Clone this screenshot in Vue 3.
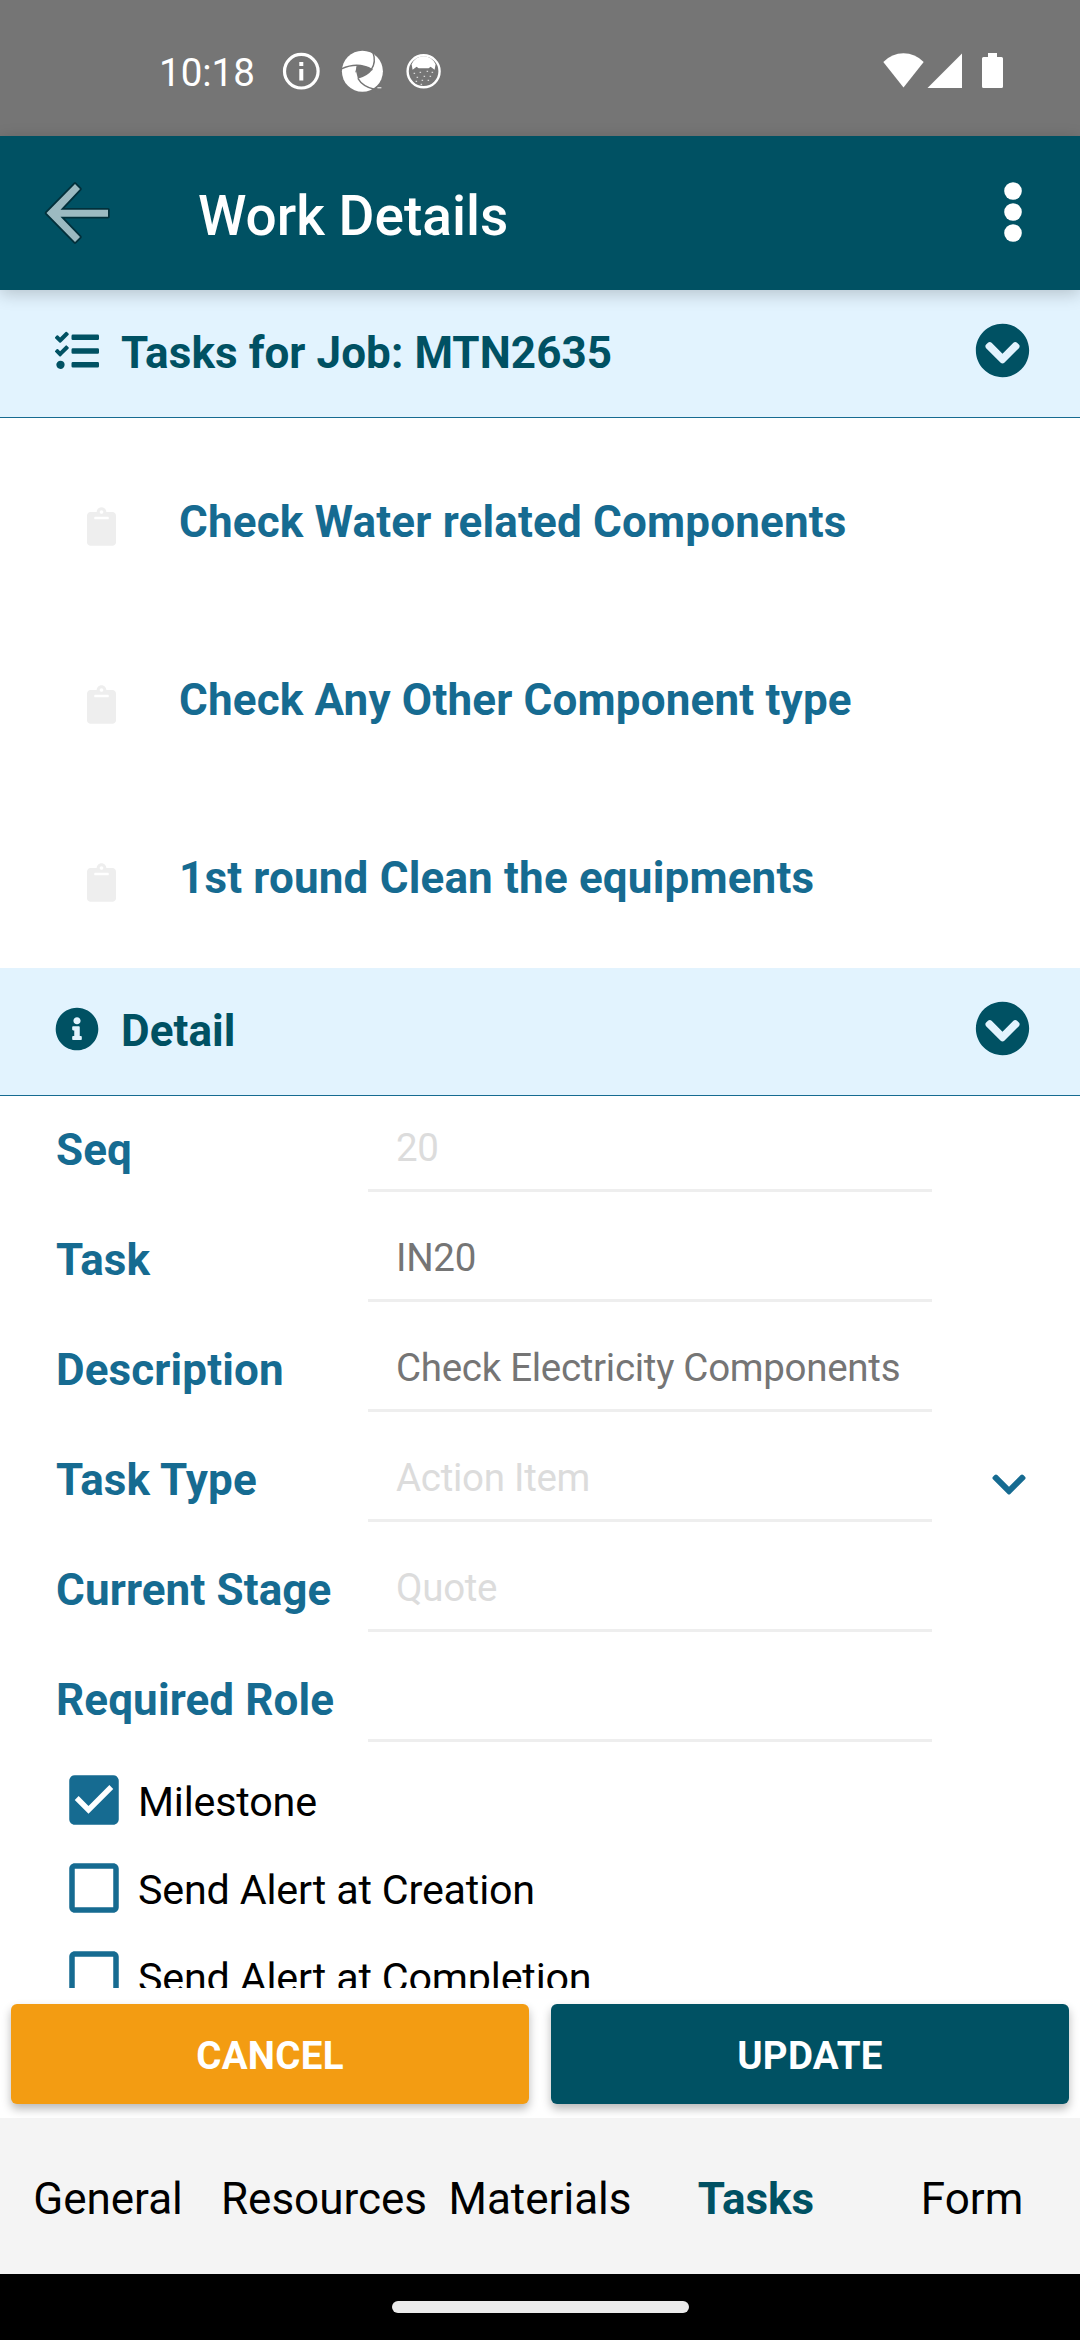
<script setup>
import { ref } from 'vue'

const jobTasks = [
  'Check Water related Components',
  'Check Any Other Component type',
  '1st round Clean the equipments',
]

const fields = [
  { label: 'Seq', value: '20', disabled: true },
  { label: 'Task', value: 'IN20' },
  { label: 'Description', value: 'Check Electricity Components' },
  { label: 'Task Type', value: 'Action Item', disabled: true, picker: true },
  { label: 'Current Stage', value: 'Quote', disabled: true },
  { label: 'Required Role', value: '' },
]

const options = ref([
  { label: 'Milestone', checked: true },
  { label: 'Send Alert at Creation', checked: false },
  { label: 'Send Alert at Completion', checked: false },
])

const tabs = ['General', 'Resources', 'Materials', 'Tasks', 'Form']
const activeTab = ref('Tasks')

const chevronCircle =
  'M504 256c0 137-111 248-248 248S8 393 8 256 119 8 256 8s248 111 248 248zM273 369.9l135.5-135.5c9.4-9.4 9.4-24.6 0-33.9l-17-17c-9.4-9.4-24.6-9.4-33.9 0L256 285.1 154.4 183.5c-9.4-9.4-24.6-9.4-33.9 0l-17 17c-9.4 9.4-9.4 24.6 0 33.9L239 369.9c9.4 9.4 24.6 9.4 34 0z'
const boxChecked =
  'M19 3H5c-1.11 0-2 .9-2 2v14c0 1.1.89 2 2 2h14c1.11 0 2-.9 2-2V5c0-1.1-.89-2-2-2zm-9 14l-5-5 1.41-1.41L10 14.17l7.59-7.59L19 8l-9 9z'
const boxBlank =
  'M19 5v14H5V5h14m0-2H5c-1.1 0-2 .9-2 2v14c0 1.1.9 2 2 2h14c1.1 0 2-.9 2-2V5c0-1.1-.9-2-2-2z'
</script>

<template>
  <div class="screen">
    <div class="status">
      <span class="clock">10:18</span>
      <svg class="notifications" width="174" height="54" viewBox="0 0 174 54">
        <circle cx="25.3" cy="27.2" r="16.8" fill="none" stroke="#fff" stroke-width="3.2" />
        <path d="M23.3 18h4v4h-4zM23.3 25h4v11.5h-4z" fill="#fff" />
        <g transform="translate(86.4 27.3)">
          <circle r="20.5" fill="#fff" />
          <path d="M-6-5Q2-7 10-1.5Q5 5-4.5 7.5Q-6.5 2-6-5z" fill="#757575" />
          <g fill="none" stroke="#757575" stroke-width="1.4">
            <path d="M10-1.5Q-4-10-21-2.5" />
            <path d="M9-2Q14-9 10.5-19" />
            <path d="M-4.5 7Q0 15 12 18" />
            <path d="M-5-5l-1.5 6" />
          </g>
          <path d="M12 17l6-4 3 5-7 3z" fill="#757575" />
          <path d="M15 16.5h4" stroke="#fff" stroke-width="1" />
        </g>
        <g transform="translate(147.6 27.3)">
          <circle r="16" fill="none" stroke="#fff" stroke-width="2.4" />
          <path d="M-12-7Q-8-15 0-15T12-7L11-1.500 7-4.500 5-3H-5L-7-4.500-11-1.500z" fill="#fff" />
          <path d="M-10 2h1.500M-4 1h1.500M3 0h1.500M8 1h1.500M-7 6h1.500M0 5h1.500M6 5h1.500M-8 10h1.500M-2 9h1.500M4 9h1.500M-3 13h1.500" stroke="#d5d5d5" stroke-width="1.3" />
        </g>
      </svg>
      <svg class="system" width="124" height="40" viewBox="0 0 124 40">
        <path d="M3.3 12Q12 3.3 23.5 3.3T43.7 12L23.5 37.5z" fill="#fff" />
        <path d="M82 3.5V38H47.5z" fill="#fff" />
        <path d="M108 3h9v4h4.5q1.500 0 1.500 1.500v28q0 1.500-1.500 1.500h-18q-1.500 0-1.500-1.500v-28q0-1.500 1.500-1.500h4.500z" fill="#fff" />
      </svg>
    </div>

    <header class="appbar">
      <svg class="back" width="70" height="66" viewBox="0 0 70 66">
        <path
          d="M6.500 33 35 4l5 5-19.500 20.700H68v7H20.500L40 57l-5 5z"
          fill="#9cbac1" stroke="#02303b" stroke-width="3.600" stroke-linejoin="round" paint-order="stroke"
        />
      </svg>
      <h1>Work Details</h1>
      <svg class="more" width="20" height="62" viewBox="0 0 20 62">
        <circle cx="10" cy="10" r="8.800" /><circle cx="10" cy="31" r="8.800" /><circle cx="10" cy="52" r="8.800" />
      </svg>
    </header>

    <main>
      <section class="bar">
        <svg width="44" height="44" viewBox="0 0 512 512">
          <path d="M139.61 35.5a12 12 0 0 0-17 0L58.93 98.81l-22.7-22.12a12 12 0 0 0-17 0L3.53 92.41a12 12 0 0 0 0 17l47.59 47.4a12.78 12.78 0 0 0 17.61 0l15.59-15.62L156.52 69a12.09 12.09 0 0 0 .09-17zm0 159.19a12 12 0 0 0-17 0l-63.68 63.72-22.7-22.1a12 12 0 0 0-17 0L3.53 252a12 12 0 0 0 0 17L51 316.5a12.77 12.77 0 0 0 17.6 0l15.7-15.69 72.2-72.22a12 12 0 0 0 .09-16.9zM64 368c-26.49 0-48.59 21.5-48.59 48S37.53 464 64 464a48 48 0 0 0 0-96zm432 16H208a16 16 0 0 0-16 16v32a16 16 0 0 0 16 16h288a16 16 0 0 0 16-16v-32a16 16 0 0 0-16-16zm0-320H208a16 16 0 0 0-16 16v32a16 16 0 0 0 16 16h288a16 16 0 0 0 16-16V80a16 16 0 0 0-16-16zm0 160H208a16 16 0 0 0-16 16v32a16 16 0 0 0 16 16h288a16 16 0 0 0 16-16v-32a16 16 0 0 0-16-16z" />
        </svg>
        <h2>Tasks for Job: MTN2635</h2>
        <svg width="55" height="55" viewBox="0 0 512 512"><path :d="chevronCircle" /></svg>
      </section>

      <ul class="tasks">
        <li v-for="task in jobTasks" :key="task">
          <svg width="29" height="39" viewBox="0 0 384 512">
            <path d="M384 112v352c0 26.510-21.490 48-48 48H48c-26.510 0-48-21.490-48-48V112c0-26.510 21.490-48 48-48h80c0-35.290 28.710-64 64-64s64 28.710 64 64h80c26.510 0 48 21.490 48 48zM192 40c-13.255 0-24 10.745-24 24s10.745 24 24 24 24-10.745 24-24-10.745-24-24-24m96 114v-20a6 6 0 0 0-6-6H102a6 6 0 0 0-6 6v20a6 6 0 0 0 6 6h180a6 6 0 0 0 6-6z" />
          </svg>
          <span>{{ task }}</span>
        </li>
      </ul>

      <section class="bar">
        <svg width="44" height="44" viewBox="0 0 512 512">
          <path d="M256 8C119.043 8 8 119.083 8 256c0 136.997 111.043 248 248 248s248-111.003 248-248C504 119.083 392.957 8 256 8zm0 110c23.196 0 42 18.804 42 42s-18.804 42-42 42-42-18.804-42-42 18.804-42 42-42zm56 254c0 6.627-5.373 12-12 12h-88c-6.627 0-12-5.373-12-12v-24c0-6.627 5.373-12 12-12h12v-64h-12c-6.627 0-12-5.373-12-12v-24c0-6.627 5.373-12 12-12h64c6.627 0 12 5.373 12 12v100h12c6.627 0 12 5.373 12 12v24z" />
        </svg>
        <h2>Detail</h2>
        <svg width="55" height="55" viewBox="0 0 512 512"><path :d="chevronCircle" /></svg>
      </section>

      <div class="form">
        <div v-for="field in fields" :key="field.label" class="row">
          <span class="label">{{ field.label }}</span>
          <span class="value" :class="{ disabled: field.disabled }">{{ field.value }}</span>
          <svg v-if="field.picker" class="picker" width="34" height="39" viewBox="0 0 448 512">
            <path d="M207.029 381.476L12.686 187.132c-9.373-9.373-9.373-24.569 0-33.941l22.667-22.667c9.357-9.357 24.522-9.375 33.901-.04L224 284.505l154.745-154.021c9.379-9.335 24.544-9.317 33.901.04l22.667 22.667c9.373 9.373 9.373 24.569 0 33.941L240.971 381.476c-9.373 9.372-24.569 9.372-33.942 0z" />
          </svg>
        </div>
      </div>

      <div class="options">
        <label v-for="option in options" :key="option.label" @click="option.checked = !option.checked">
          <svg width="66" height="66" viewBox="0 0 24 24"><path :d="option.checked ? boxChecked : boxBlank" /></svg>
          <span>{{ option.label }}</span>
        </label>
      </div>
    </main>

    <div class="actions">
      <button class="cancel">CANCEL</button>
      <button class="update">UPDATE</button>
    </div>

    <nav>
      <a v-for="tab in tabs" :key="tab" :class="{ active: tab === activeTab }" @click="activeTab = tab">{{ tab }}</a>
    </nav>

    <div class="gesture"><i></i></div>
  </div>
</template>

<style>
body {
  margin: 0;
}
</style>

<style scoped>
.screen {
  display: flex;
  flex-direction: column;
  width: 1080px;
  height: 2340px;
  overflow: hidden;
  background: #fff;
  font-family: Roboto, 'Liberation Sans', sans-serif;
  font-size: 44px;
  line-height: 52px;
  color: #000;
}
svg {
  display: block;
  flex: none;
}
h1,
h2,
ul {
  margin: 0;
  padding: 0;
}
.status {
  flex: none;
  height: 136px;
  box-sizing: border-box;
  display: flex;
  align-items: flex-start;
  padding: 0 76px 0 159px;
  background: #757575;
  color: #fff;
}
.clock {
  width: 117px;
  margin-top: 47px;
  font-size: 38.5px;
}
.notifications {
  margin-top: 44px;
}
.system {
  margin: 50px 0 0 auto;
}
.appbar {
  flex: none;
  position: relative;
  z-index: 1;
  display: flex;
  align-items: center;
  height: 154px;
  box-sizing: border-box;
  padding: 0 57px 0 40px;
  background: #005163;
  box-shadow: 0 4px 16px rgba(0, 0, 0, 0.2);
}
.appbar h1 {
  flex: 1;
  margin: 5px 0 0 88px;
  font-size: 55px;
  font-weight: 500;
  line-height: 64px;
  color: #fff;
}
.more {
  margin-bottom: 2px;
  fill: #fff;
}
main {
  flex: none;
  height: 1698px;
  overflow: hidden;
}
.bar {
  display: flex;
  align-items: center;
  height: 128px;
  box-sizing: border-box;
  padding: 0 50px 6px 55px;
  background: #e2f3fe;
  border-bottom: 1px solid #166b91;
  fill: #005163;
}
.bar h2 {
  flex: 1;
  margin: 4px 0 0 22px;
  font-size: 44px;
  font-weight: 700;
  letter-spacing: 0.07px;
  color: #005163;
}
.tasks {
  padding: 16px 0 0;
  list-style: none;
}
.tasks li {
  display: flex;
  align-items: center;
  height: 178px;
  font-weight: 700;
  letter-spacing: 0.17px;
  color: #166b91;
}
.tasks svg {
  margin: 7px 63px 0 87px;
  fill: #eee;
}
.tasks span {
  margin-bottom: 2px;
}
.form {
  display: flex;
  flex-direction: column;
  gap: 14px;
}
.row {
  display: flex;
  height: 96px;
}
.label {
  width: 312px;
  margin: 28px 0 0 56px;
  font-weight: 700;
  letter-spacing: 0.12px;
  white-space: nowrap;
  color: #166b91;
}
.value {
  width: 564px;
  box-sizing: border-box;
  border-bottom: 3px solid #eee;
  padding: 26px 0 0 28px;
  font-size: 38.5px;
  letter-spacing: -0.29px;
  color: #757575;
}
.value.disabled {
  color: #dcdcdc;
}
.picker {
  margin: 39px 0 0 60px;
  fill: #166b91;
}
.options {
  padding-top: 14px;
}
.options label {
  display: flex;
  align-items: center;
  gap: 11px;
  height: 88px;
  padding-left: 61px;
  font-size: 41.25px;
  letter-spacing: -0.18px;
  fill: #166b91;
}
.options span {
  margin-top: 3px;
}
.actions {
  flex: none;
  position: relative;
  z-index: 1;
  display: flex;
  gap: 22px;
  height: 130px;
  box-sizing: border-box;
  padding: 16px 11px 14px;
}
.actions button {
  flex: 1;
  border: 0;
  border-radius: 6px;
  padding: 2px 0 0;
  font: 700 38.5px Roboto, 'Liberation Sans', sans-serif;
  letter-spacing: 0.3px;
  color: #fff;
  box-shadow: 0 5px 10px rgba(0, 0, 0, 0.28);
}
.cancel {
  background: #f39c12;
}
.update {
  background: #005163;
}
nav {
  flex: none;
  display: flex;
  align-items: center;
  height: 156px;
  box-sizing: border-box;
  padding-top: 5px;
  background: #f4f4f4;
}
nav a {
  flex: 1 1 0;
  width: 216px;
  text-align: center;
}
nav a.active {
  font-weight: 700;
  color: #005163;
}
.gesture {
  flex: none;
  display: flex;
  align-items: center;
  justify-content: center;
  height: 66px;
  background: #000;
}
.gesture i {
  width: 297px;
  height: 12px;
  border-radius: 6px;
  background: #ebebeb;
}
</style>
